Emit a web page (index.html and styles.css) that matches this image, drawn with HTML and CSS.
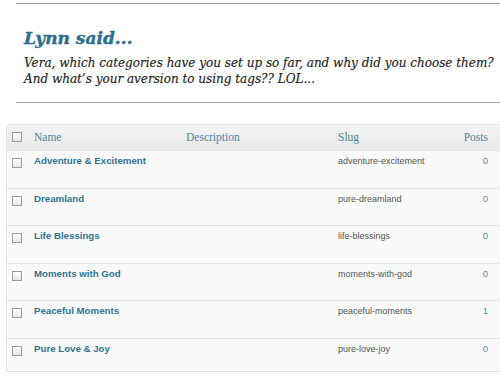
FILE: index.html
```html
<!DOCTYPE html>
<html lang="en">
<head>
  <meta charset="UTF-8" />
  <title>Lynn said...</title>
  <link rel="stylesheet" href="styles.css">
</head>
<body>
<div class="comment">
  <h2>Lynn said...</h2>
  <p>Vera, which categories have you set up so far, and why did you choose them? And what’s your aversion to using tags?? LOL...</p>
</div>

<table class="cats">
  <thead>
    <tr>
      <th class="cb"><span class="box"></span></th>
      <th class="name">Name</th>
      <th class="desc">Description</th>
      <th class="slug">Slug</th>
      <th class="posts">Posts</th>
    </tr>
  </thead>
  <tbody>
    <tr>
      <td class="cb"><span class="box"></span></td>
      <td class="name">Adventure &amp; Excitement</td>
      <td class="desc"></td>
      <td class="slug">adventure-excitement</td>
      <td class="posts">0</td>
    </tr>
    <tr>
      <td class="cb"><span class="box"></span></td>
      <td class="name">Dreamland</td>
      <td class="desc"></td>
      <td class="slug">pure-dreamland</td>
      <td class="posts">0</td>
    </tr>
    <tr>
      <td class="cb"><span class="box"></span></td>
      <td class="name">Life Blessings</td>
      <td class="desc"></td>
      <td class="slug">life-blessings</td>
      <td class="posts">0</td>
    </tr>
    <tr>
      <td class="cb"><span class="box"></span></td>
      <td class="name">Moments with God</td>
      <td class="desc"></td>
      <td class="slug">moments-with-god</td>
      <td class="posts">0</td>
    </tr>
    <tr>
      <td class="cb"><span class="box"></span></td>
      <td class="name">Peaceful Moments</td>
      <td class="desc"></td>
      <td class="slug">peaceful-moments</td>
      <td class="posts">1</td>
    </tr>
    <tr class="last">
      <td class="cb"><span class="box"></span></td>
      <td class="name">Pure Love &amp; Joy</td>
      <td class="desc"></td>
      <td class="slug">pure-love-joy</td>
      <td class="posts">0</td>
    </tr>
  </tbody>
</table>
</body>
</html>
```

FILE: styles.css
```css
body {
  margin: 0;
  background: #fff;
  overflow: hidden;
  font-family: 'Liberation Sans', Arial, sans-serif;
}
.comment {
  margin: 3px 0 0 16px;
  height: 98px;
  padding-left: 8px;
  border-top: 1px solid #a3a3a3;
  border-bottom: 1px solid #a3a3a3;
  box-sizing: content-box;
}
.comment h2 {
  margin: 0;
  padding-top: 24px;
  font-family: 'DejaVu Serif', Georgia, serif;
  font-style: italic;
  font-weight: bold;
  font-size: 17px;
  line-height: 20px;
  color: #2c6f8e;
  -webkit-text-stroke: 0.4px #2c6f8e;
}
.comment p {
  margin: 7px 0 0;
  width: 476px;
  font-family: 'DejaVu Serif', Georgia, serif;
  font-style: italic;
  font-size: 12px;
  line-height: 16px;
  color: #222;
  -webkit-text-stroke: 0.15px #222;
}
.cats {
  margin: 21px 0 0 6px;
  width: 500px;
  table-layout: fixed;
  border-collapse: separate;
  border-spacing: 0;
  border: 1px solid #e2e2e2;
  border-radius: 4px 0 0 0;
}
.cats th, .cats td {
  padding: 0 0 0 5px;
  text-align: left;
  vertical-align: top;
}
.cats th {
  height: 25px;
  line-height: 25px;
  font-family: 'Liberation Serif', Georgia, serif;
  font-weight: normal;
  font-size: 11.5px;
  color: #4a8aa6;
  background: linear-gradient(#f3f3f3, #e9e9e9);
}
.cats td {
  height: 37.5px;
  box-sizing: border-box;
  padding-top: 4px;
  line-height: 12px;
  background: #fafafa;
  border-top: 1px solid #e4e4e4;
}
.cats tr.last td {
  height: 33px;
}
.cats .cb { width: 17px; }
.cats .name { width: 147px; }
.cats .desc { width: 147px; }
.cats .slug { width: 110px; }
.cats .posts {
  text-align: right;
  padding-right: 17px;
}
td.name {
  font-weight: bold;
  font-size: 9.7px;
  color: #2e7494;
}
td.slug {
  font-size: 9px;
  color: #555;
}
td.posts {
  font-size: 9.5px;
  color: #5b8ba2;
  padding-right: 19px;
}
.box {
  display: inline-block;
  width: 8px;
  height: 8px;
  border: 1px solid #9c9c9c;
  background: linear-gradient(#fff, #e6e6e6);
  vertical-align: top;
}
th .box { margin-top: 7px; }
td .box { margin-top: 3px; }
```
